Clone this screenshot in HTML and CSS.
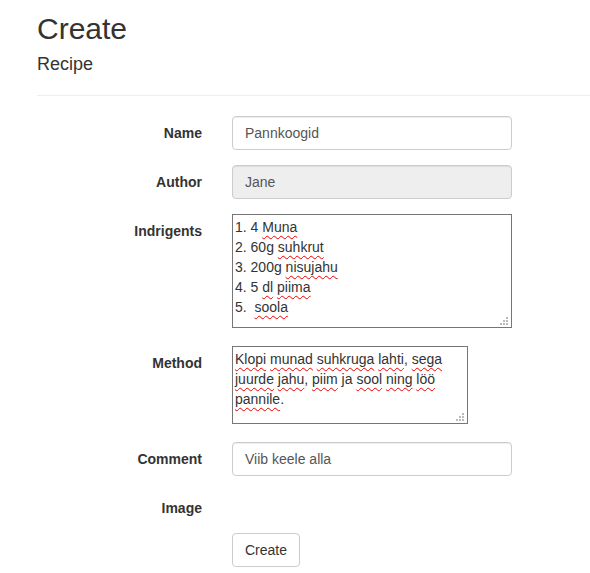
FILE: index.html
```html
<!DOCTYPE html>
<html lang="et">
<head>
<meta charset="utf-8">
<title>Create</title>
<link rel="stylesheet" href="styles.css">
</head>
<body>
<div class="container">
  <h2 class="title">Create</h2>
  <h4 class="subtitle">Recipe</h4>
  <hr class="rule">
  <form class="form">
    <div class="group">
      <label class="label">Name</label>
      <div class="field"><input class="input" type="text" value="Pannkoogid"></div>
    </div>
    <div class="group">
      <label class="label">Author</label>
      <div class="field"><input class="input input-disabled" type="text" value="Jane" disabled></div>
    </div>
    <div class="group group-area">
      <label class="label">Indrigents</label>
      <div class="field">
        <div class="area area-ingredients">
          <div>1. 4 <span class="sp">Muna</span></div>
          <div>2. 60g <span class="sp">suhkrut</span></div>
          <div>3. 200g <span class="sp">nisujahu</span></div>
          <div>4. 5 <span class="sp">dl</span> <span class="sp">piima</span></div>
          <div>5. &nbsp;<span class="sp">soola</span></div>
          <svg class="grip" width="8" height="8" viewBox="0 0 8 8"><rect x="6" y="0" width="2" height="2"/><rect x="3" y="3" width="2" height="2"/><rect x="6" y="3" width="2" height="2"/><rect x="0" y="6" width="2" height="2"/><rect x="3" y="6" width="2" height="2"/><rect x="6" y="6" width="2" height="2"/></svg>
        </div>
      </div>
    </div>
    <div class="group group-area">
      <label class="label">Method</label>
      <div class="field">
        <div class="area area-method"><span class="sp">Klopi</span> <span class="sp">munad</span> <span class="sp">suhkruga</span> <span class="sp">lahti</span>, <span class="sp">sega</span> <span class="sp">juurde</span> <span class="sp">jahu</span>, <span class="sp">piim</span> ja <span class="sp">sool</span> <span class="sp">ning</span> <span class="sp">löö</span> <span class="sp">pannile</span>.<svg class="grip" width="8" height="8" viewBox="0 0 8 8"><rect x="6" y="0" width="2" height="2"/><rect x="3" y="3" width="2" height="2"/><rect x="6" y="3" width="2" height="2"/><rect x="0" y="6" width="2" height="2"/><rect x="3" y="6" width="2" height="2"/><rect x="6" y="6" width="2" height="2"/></svg></div>
      </div>
    </div>
    <div class="group">
      <label class="label">Comment</label>
      <div class="field"><input class="input" type="text" value="Viib keele alla"></div>
    </div>
    <div class="group">
      <label class="label">Image</label>
      <div class="field"></div>
    </div>
    <div class="group">
      <div class="label-spacer"></div>
      <div class="field"><button class="btn" type="button">Create</button></div>
    </div>
  </form>
</div>
</body>
</html>
```

FILE: styles.css
```css
* { box-sizing: border-box; }
html, body {
  margin: 0;
  padding: 0;
  background: #fff;
}
body {
  font-family: "Liberation Sans", Arial, sans-serif;
  font-size: 14px;
  line-height: 20px;
  color: #333;
}
.container {
  padding-left: 37px;
  padding-top: 12px;
}
.title {
  margin: 0 0 10px 0;
  font-size: 30px;
  line-height: 33px;
  font-weight: 500;
  color: #333;
}
.subtitle {
  margin: 0;
  font-size: 18px;
  line-height: 19.8px;
  font-weight: 500;
  color: #333;
}
.rule {
  margin: 20px 0 20px 0;
  border: 0;
  border-top: 1px solid #eee;
  height: 0;
}
.form {
  display: flex;
  flex-direction: column;
  gap: 15px;
}
.group {
  display: flex;
  align-items: flex-start;
}
.group-area {
  padding-bottom: 3px;
}
.label,
.label-spacer {
  width: 165px;
  margin-right: 30px;
  flex: none;
  text-align: right;
  font-weight: bold;
  padding-top: 7px;
  line-height: 20px;
  color: #333;
}
.label-spacer { padding-top: 0; }
.field {
  width: 280px;
  flex: none;
  min-height: 27px;
}
.input {
  display: block;
  width: 280px;
  height: 34px;
  padding: 6px 12px;
  font-family: "Liberation Sans", Arial, sans-serif;
  font-size: 14px;
  line-height: 20px;
  color: #555;
  background: #fff;
  border: 1px solid #ccc;
  border-radius: 4px;
  box-shadow: inset 0 1px 1px rgba(0,0,0,.075);
  outline: none;
}
.input-disabled {
  background: #eee;
  opacity: 1;
  -webkit-text-fill-color: #555;
}
.area {
  position: relative;
  border: 1px solid #767676;
  padding: 2px;
  font-size: 14px;
  line-height: 20px;
  color: #333;
  background: #fff;
}
.area-ingredients {
  width: 280px;
  height: 114px;
}
.area-method {
  width: 236px;
  height: 78px;
}
.sp {
  text-decoration: underline wavy #e00;
  text-decoration-thickness: 1px;
  text-underline-offset: 3px;
  text-decoration-skip-ink: none;
}
.grip {
  position: absolute;
  right: 3px;
  bottom: 2px;
  fill: #bbb;
}
.btn {
  display: inline-block;
  height: 34px;
  padding: 6px 12px;
  font-family: "Liberation Sans", Arial, sans-serif;
  font-size: 14px;
  line-height: 20px;
  color: #333;
  background: #fff;
  border: 1px solid #ccc;
  border-radius: 4px;
}
```
